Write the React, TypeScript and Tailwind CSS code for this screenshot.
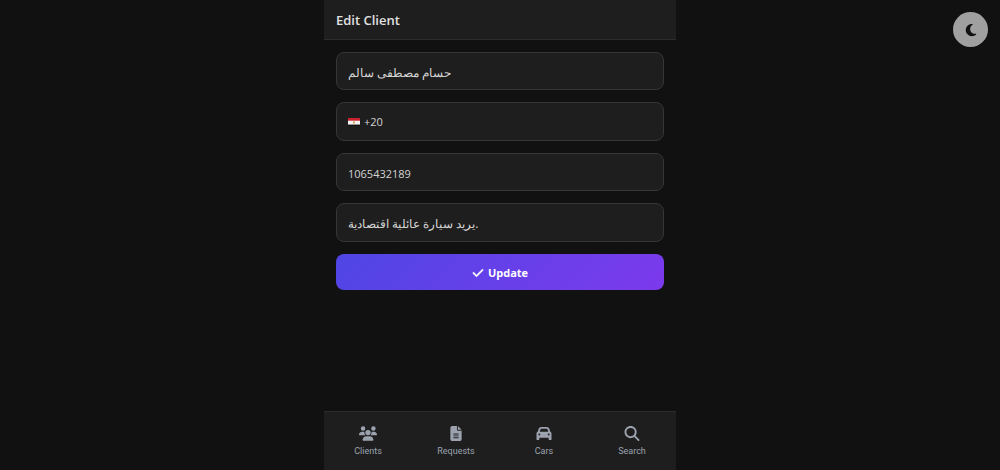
import { FaCar, FaCheck, FaFileLines, FaMagnifyingGlass, FaMoon, FaUsers } from "react-icons/fa6";

const navItems = [
  { label: "Clients", Icon: FaUsers },
  { label: "Requests", Icon: FaFileLines },
  { label: "Cars", Icon: FaCar },
  { label: "Search", Icon: FaMagnifyingGlass },
];

const fieldBox =
  "w-full rounded-lg border border-[#363636] bg-[#1e1e1e] px-[11px] text-[#d4d4d4] outline-none focus-within:border-indigo-500";

function EgyptFlag() {
  return (
    <svg viewBox="0 0 12 8" className="h-2 w-3 shrink-0" aria-hidden="true">
      <rect width="12" height="8" fill="#f4f4f4" />
      <rect width="12" height="2.7" fill="#c8202c" />
      <rect y="6.6" width="12" height="1.4" fill="#111111" />
      <path d="M5 3.2l1 .4 1-.4v1.8l-.5.8h-1L5 5z" fill="#d9a866" />
    </svg>
  );
}

export default function App() {
  return (
    <div className="flex min-h-screen justify-center bg-[#111111] font-['Open_Sans','Noto_Sans',sans-serif]">
      <div className="flex w-full max-w-[352px] flex-col">
        <header className="flex h-10 items-center border-b border-[#2c2c2c] bg-[#1e1e1e] px-3 pt-px">
          <h1 className="text-[13px] leading-5 font-semibold text-[#e0e0e0]">Edit Client</h1>
        </header>

        <main className="flex-1 px-3 pt-3">
          <form className="flex flex-col gap-3" onSubmit={(e) => e.preventDefault()}>
            <input aria-label="Name" defaultValue="حسام مصطفى سالم" className={`${fieldBox} h-[38px] pt-0.5 text-xs`} />
            <div className={`${fieldBox} flex h-[39px] items-center gap-1 text-[11px]`}>
              <EgyptFlag />
              <select aria-label="Country code" className="flex-1 appearance-none bg-transparent pt-0.5 outline-none">
                <option>+20</option>
              </select>
            </div>
            <input
              aria-label="Phone number"
              type="tel"
              defaultValue="1065432189"
              className={`${fieldBox} h-[38px] pt-0.5 text-[11px]`}
            />
            <input
              aria-label="Notes"
              defaultValue="يريد سيارة عائلية اقتصادية."
              className={`${fieldBox} h-[39px] pt-0.5 text-xs`}
            />
            <button
              type="submit"
              className="flex h-9 items-center justify-center gap-1 rounded-lg bg-[linear-gradient(135deg,#4f46e5,#7c3aed)] pt-0.5 text-[11px] font-bold text-white"
            >
              <FaCheck className="size-3" stroke="currentColor" strokeWidth="16" aria-hidden="true" />
              Update
            </button>
          </form>
        </main>

        <nav className="grid h-[59px] grid-cols-4 border-t border-[#2c2c2c] bg-[#1e1e1e] pt-px">
          {navItems.map(({ label, Icon }) => (
            <a
              key={label}
              href={`#${label.toLowerCase()}`}
              className="flex flex-col items-center justify-center gap-1 text-[#9ca3af]"
            >
              <Icon className="h-[15px] w-[18px]" aria-hidden="true" />
              <span className="font-[Roboto,sans-serif] text-[9px] leading-3">{label}</span>
            </a>
          ))}
        </nav>
      </div>

      <button
        type="button"
        aria-label="Toggle dark mode"
        className="fixed top-3 right-3 flex size-[35px] items-center justify-center rounded-full bg-[#a0a0a0] text-[#111111]"
      >
        <FaMoon className="size-3.5" aria-hidden="true" />
      </button>
    </div>
  );
}
